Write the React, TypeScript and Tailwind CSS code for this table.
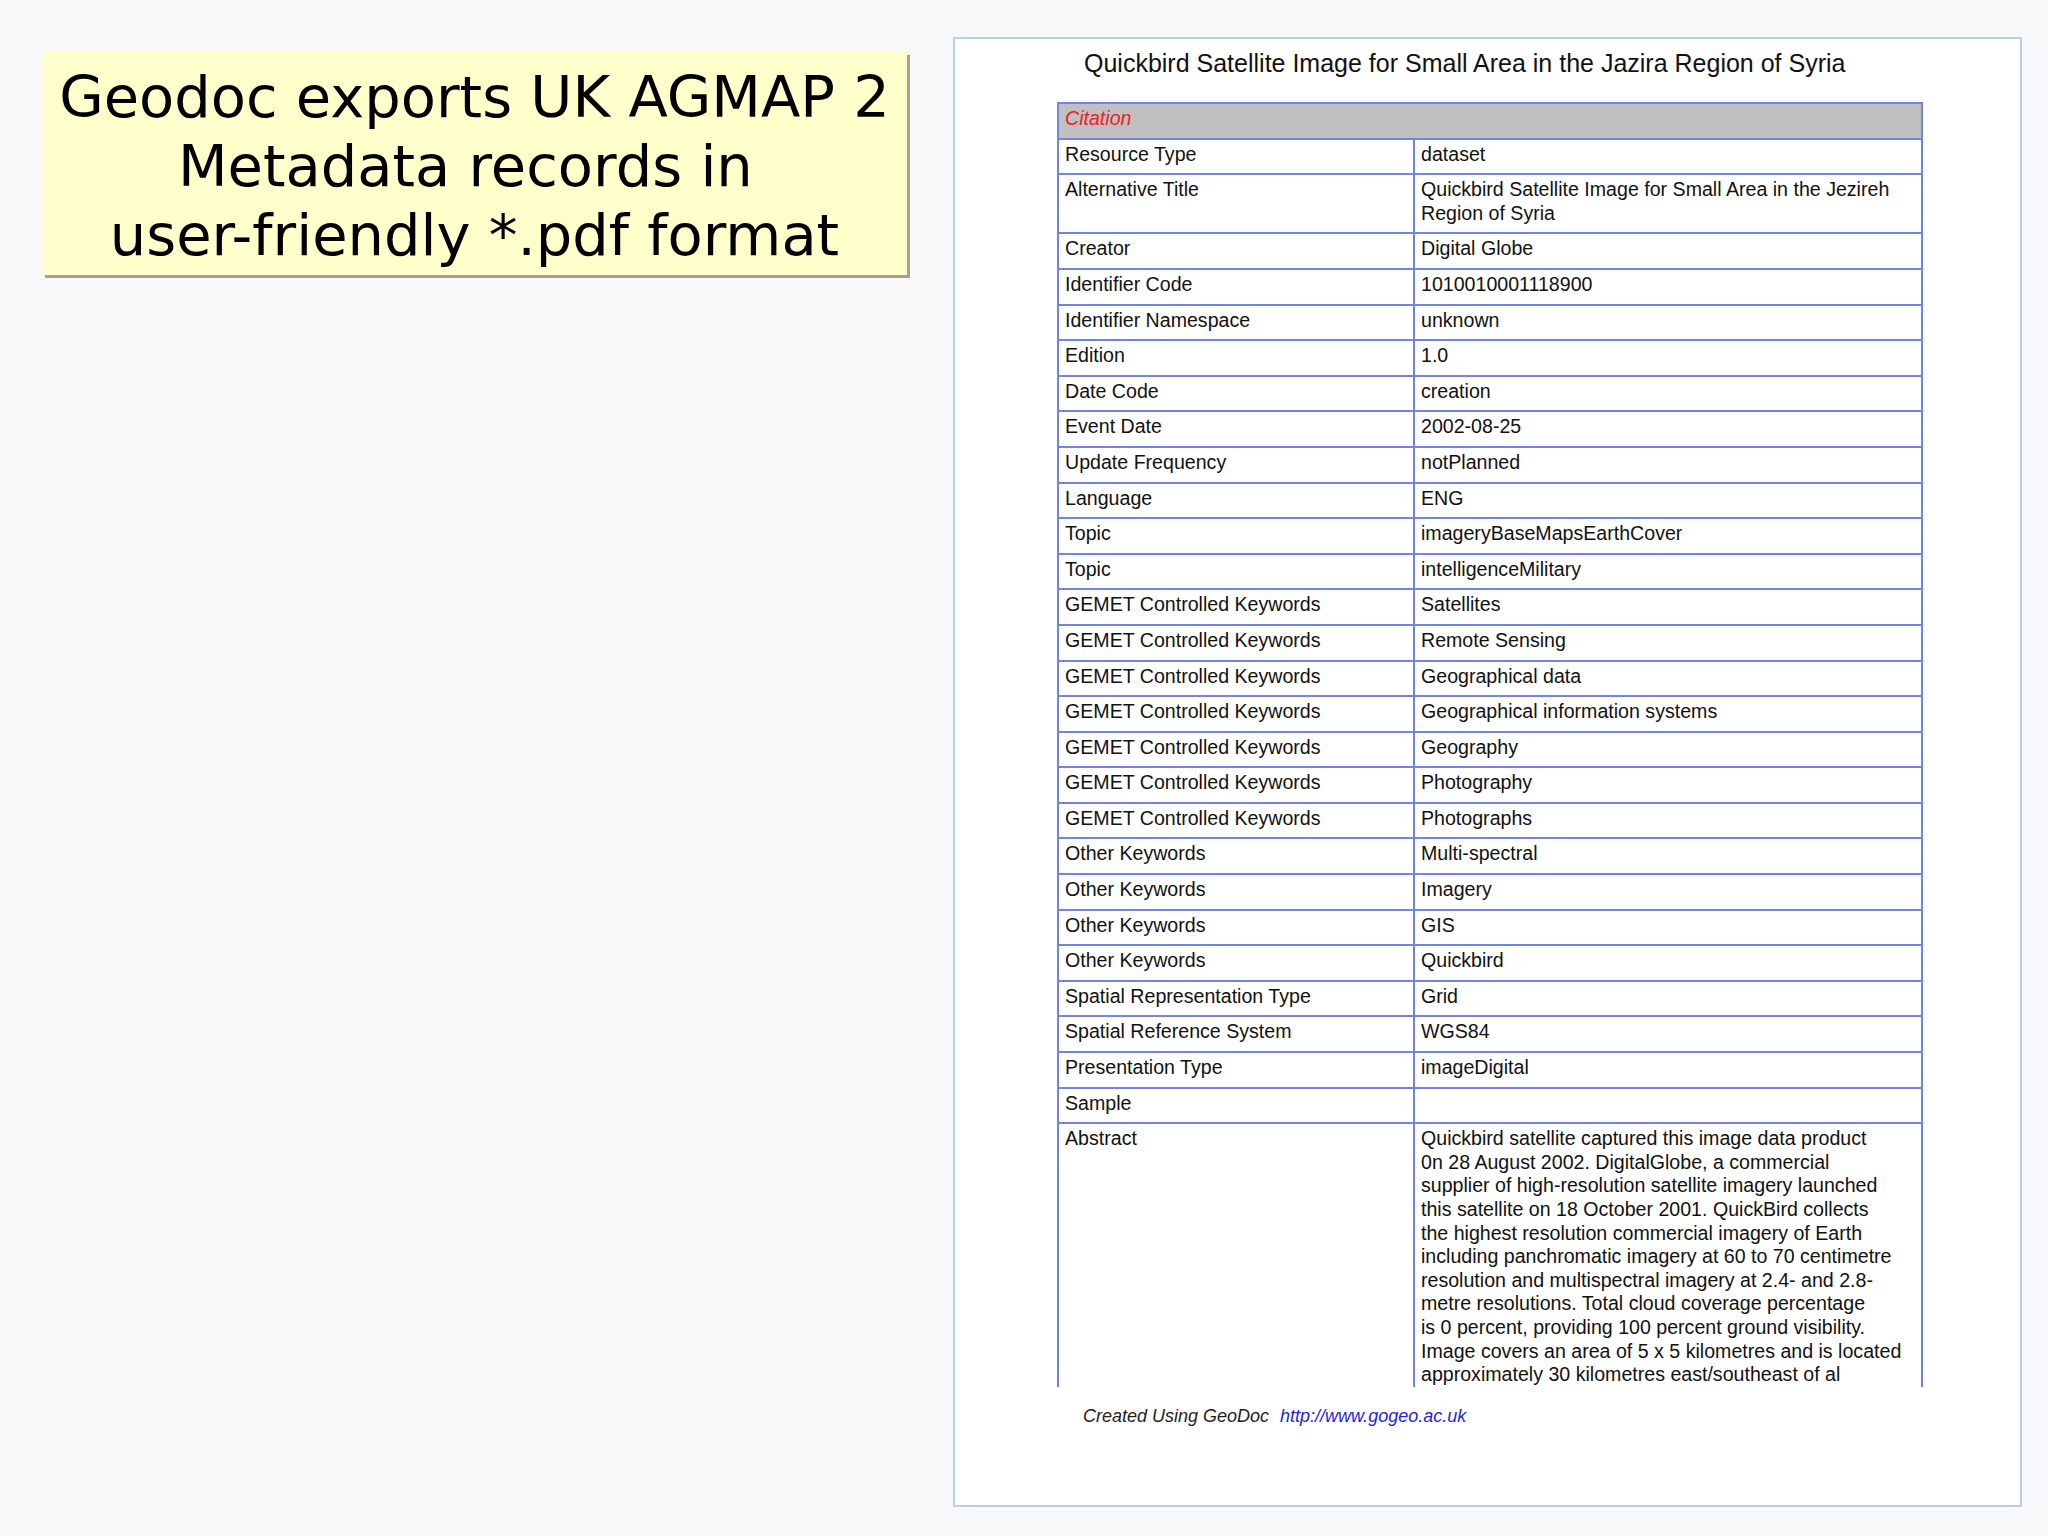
import React from 'react';

const rows: [string, string][] = [
  ['Resource Type', 'dataset'],
  ['Alternative Title', 'Quickbird Satellite Image for Small Area in the Jezireh\nRegion of Syria'],
  ['Creator', 'Digital Globe'],
  ['Identifier Code', '1010010001118900'],
  ['Identifier Namespace', 'unknown'],
  ['Edition', '1.0'],
  ['Date Code', 'creation'],
  ['Event Date', '2002-08-25'],
  ['Update Frequency', 'notPlanned'],
  ['Language', 'ENG'],
  ['Topic', 'imageryBaseMapsEarthCover'],
  ['Topic', 'intelligenceMilitary'],
  ['GEMET Controlled Keywords', 'Satellites'],
  ['GEMET Controlled Keywords', 'Remote Sensing'],
  ['GEMET Controlled Keywords', 'Geographical data'],
  ['GEMET Controlled Keywords', 'Geographical information systems'],
  ['GEMET Controlled Keywords', 'Geography'],
  ['GEMET Controlled Keywords', 'Photography'],
  ['GEMET Controlled Keywords', 'Photographs'],
  ['Other Keywords', 'Multi-spectral'],
  ['Other Keywords', 'Imagery'],
  ['Other Keywords', 'GIS'],
  ['Other Keywords', 'Quickbird'],
  ['Spatial Representation Type', 'Grid'],
  ['Spatial Reference System', 'WGS84'],
  ['Presentation Type', 'imageDigital'],
  ['Sample', ''],
  [
    'Abstract',
    [
      'Quickbird satellite captured this image data product',
      '0n 28 August 2002. DigitalGlobe, a commercial',
      'supplier of high-resolution satellite imagery launched',
      'this satellite on 18 October 2001. QuickBird collects',
      'the highest resolution commercial imagery of Earth',
      'including panchromatic imagery at 60 to 70 centimetre',
      'resolution and multispectral imagery at 2.4- and 2.8-',
      'metre resolutions. Total cloud coverage percentage',
      'is 0 percent, providing 100 percent ground visibility.',
      'Image covers an area of 5 x 5 kilometres and is located',
      'approximately 30 kilometres east/southeast of al',
    ].join('\n'),
  ],
];

function Cell({ text }: { text: string }) {
  return (
    <td className="border-2 border-[#7283e0] px-[6px] pt-[3px] pb-[7px] align-top leading-[23.6px]">
      {text.split('\n').map((line, i) => (
        <div key={i} className="whitespace-nowrap">
          {line || '\u00a0'}
        </div>
      ))}
    </td>
  );
}

export default function App() {
  return (
    <div className="w-[2048px] h-[1536px] bg-[#f8f8fa] flex items-start overflow-hidden">
      {/* slide title box */}
      <div className="ml-[42px] mt-[52px] w-[865px] h-[223px] bg-[#ffffcc] shadow-[3px_3px_0_#a3a38a] pt-[11px] text-center text-black text-[57.5px] leading-[69px] font-['DejaVu_Sans',sans-serif]">
        Geodoc exports UK AGMAP 2
        <br />
        Metadata records in{'\u00a0'}
        <br />
        user-friendly *.pdf format
      </div>

      {/* pdf page */}
      <div className="ml-[46px] mt-[37px] w-[1069px] h-[1470px] border-2 border-[#bccfe0] bg-white font-['Liberation_Sans',Arial,sans-serif] text-[#111]">
        <div className="mt-[9px] pl-[129px] text-[25px] leading-[30px] whitespace-nowrap">
          Quickbird Satellite Image for Small Area in the Jazira Region of Syria
        </div>

        <div className="ml-[101px] mt-[24px] w-[868px] h-[1285px] overflow-hidden pl-[1px]">
          <table className="w-[864px] table-fixed border-collapse text-[19.6px]">
            <colgroup>
              <col className="w-[356px]" />
              <col className="w-[508px]" />
            </colgroup>
            <tbody>
              <tr className="bg-[#c0c0c0]">
                <td colSpan={2} className="border-2 border-[#7283e0] px-[6px] pt-[3px] pb-[7px] leading-[23.6px] italic text-[#ee1c25]">
                  Citation
                </td>
              </tr>
              {rows.map(([label, value], i) => (
                <tr key={i}>
                  <Cell text={label} />
                  <Cell text={value} />
                </tr>
              ))}
            </tbody>
          </table>
        </div>

        <div className="mt-[19px] pl-[128px] text-[18px] leading-[21px] italic whitespace-nowrap">
          <span className="text-[#222]">Created Using GeoDoc</span>
          <span className="ml-[11px] text-[#2424e0]">http://www.gogeo.ac.uk</span>
        </div>
      </div>
    </div>
  );
}
